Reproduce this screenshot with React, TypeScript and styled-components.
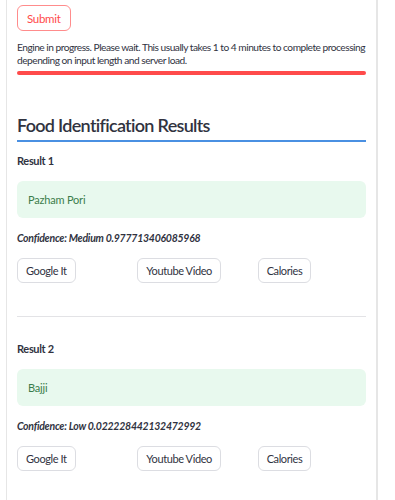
import React from 'react';
import styled, { createGlobalStyle } from 'styled-components';

const GlobalStyle = createGlobalStyle`
  body {
    margin: 0;
    background: #ffffff;
    font-family: Lato, "Noto Sans", sans-serif;
    color: #31333f;
  }
`;

const Card = styled.div`
  margin-left: 6px;
  width: 349px;
  min-height: 500px;
  padding: 5px 10px 0 10px;
  border-left: 1px solid #e6e6e6;
  border-right: 2px solid #e6e6e6;
  box-sizing: content-box;
`;

const SubmitButton = styled.button`
  display: block;
  height: 26px;
  padding: 0 9px;
  border: 1px solid #ff8c8c;
  border-radius: 6px;
  background: #ffffff;
  color: #ff4b4b;
  font-family: inherit;
  font-size: 11.5px;
  letter-spacing: -0.3px;
`;

const Status = styled.p`
  margin: 10px 0 0 0;
  font-size: 10.2px;
  line-height: 13px;
  letter-spacing: -0.5px;
  color: #31333f;
  white-space: nowrap;
`;

const ProgressBar = styled.div`
  margin-top: 4px;
  height: 4px;
  border-radius: 2px;
  background: #ff4b4b;
`;

const Heading = styled.h2`
  margin: 38px 0 0 0;
  padding-bottom: 3px;
  border-bottom: 2px solid #4a90e2;
  font-size: 18px;
  line-height: 24px;
  letter-spacing: -0.7px;
  font-weight: 600;
  color: #31333f;
`;

const Result = styled.section``;

const ResultLabel = styled.div<{ first?: boolean }>`
  margin-top: ${props => (props.first ? '12px' : '25px')};
  font-size: 11px;
  line-height: 14px;
  letter-spacing: -0.35px;
  font-weight: 700;
`;

const FoodBox = styled.div`
  margin-top: 13px;
  height: 37px;
  display: flex;
  align-items: center;
  padding-left: 11px;
  border-radius: 6px;
  background: #e8f9ee;
  color: #3b7d4c;
  font-size: 11px;
  letter-spacing: -0.2px;
`;

const Confidence = styled.div`
  margin-top: 13px;
  font-size: 10.5px;
  line-height: 14px;
  letter-spacing: -0.25px;
  font-style: italic;
  font-weight: 700;
`;

const LinkRow = styled.div`
  margin-top: 13px;
  display: grid;
  grid-template-columns: repeat(3, 1fr);
  gap: 12px;
`;

const LinkButton = styled.button`
  justify-self: start;
  height: 25px;
  padding: 0 8px;
  border: 1px solid #dcdde2;
  border-radius: 6px;
  background: #ffffff;
  color: #31333f;
  font-family: inherit;
  font-size: 11px;
  letter-spacing: -0.4px;
`;

const Divider = styled.hr`
  margin: 33px 0 0 0;
  border: none;
  border-top: 1px solid #e3e3e6;
`;

const results = [
  { name: 'Pazham Pori', confidence: 'Medium 0.977713406085968' },
  { name: 'Bajji', confidence: 'Low 0.022228442132472992' },
];

const App: React.FC = () => {
  return (
    <>
      <GlobalStyle />
      <Card>
        <SubmitButton>Submit</SubmitButton>
        <Status>
          Engine in progress. Please wait. This usually takes 1 to 4 minutes to complete processing
          <br />
          depending on input length and server load.
        </Status>
        <ProgressBar />
        <Heading>Food Identification Results</Heading>
        {results.map((r, i) => (
          <Result key={r.name}>
            {i > 0 && <Divider />}
            <ResultLabel first={i === 0}>Result {i + 1}</ResultLabel>
            <FoodBox>{r.name}</FoodBox>
            <Confidence>Confidence: {r.confidence}</Confidence>
            <LinkRow>
              <LinkButton>Google It</LinkButton>
              <LinkButton>Youtube Video</LinkButton>
              <LinkButton>Calories</LinkButton>
            </LinkRow>
          </Result>
        ))}
      </Card>
    </>
  );
};

export default App;
